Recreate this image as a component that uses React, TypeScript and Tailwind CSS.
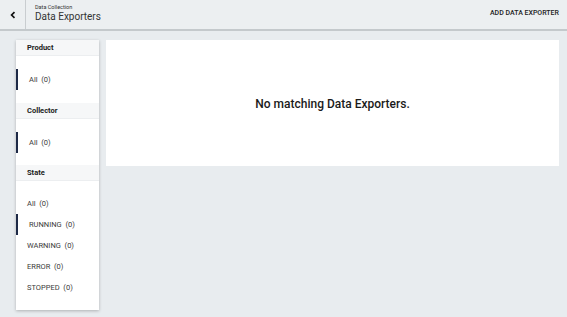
import React from "react";

const font = { fontFamily: "Roboto, 'Liberation Sans', sans-serif" };

function Item({ label, active }: { label: string; active?: boolean }) {
  return (
    <div
      className={`h-[21px] flex items-center text-[7.5px] text-[#3a3a3a] ${
        active ? "border-l-2 border-[#1e2a47] pl-[11px]" : "pl-[11px]"
      }`}
    >
      <span className="whitespace-pre">{label}</span>
    </div>
  );
}

function Section({
  title,
  items,
  body,
}: {
  title: string;
  items: { label: string; active?: boolean }[];
  body: string;
}) {
  return (
    <div>
      <div className="h-[16px] flex items-center pt-[1px] pl-[11px] bg-[#f6f7f8] border-b border-[#eceef0] text-[7.5px] font-bold text-[#222]">
        {title}
      </div>
      <div className={body}>
        {items.map((it) => (
          <Item key={it.label} label={it.label} active={it.active} />
        ))}
      </div>
    </div>
  );
}

export default function App() {
  return (
    <div className="w-[567px] h-[317px] flex flex-col overflow-hidden bg-[#e8ecef]" style={font}>
      <div className="h-[31px] flex bg-[#eceff1] border-b-2 border-[#c4c9cc] shrink-0">
        <div className="w-[26px] flex items-center justify-center border-r border-[#c9cdd0]">
          <svg width="8" height="8" viewBox="0 0 8 8">
            <path d="M5.5 1.2 L2.6 4 L5.5 6.8" stroke="#111" strokeWidth="1.7" fill="none" />
          </svg>
        </div>
        <div className="flex flex-col justify-center pl-[9px] pb-[2px]">
          <div className="text-[5.5px] leading-[7px] text-[#333]">Data Collection</div>
          <div className="text-[10px] leading-[12px] text-[#333]">Data Exporters</div>
        </div>
        <div className="flex-1" />
        <div className="flex items-center pr-[8px] pb-[2px] text-[7px] font-medium text-[#222]">
          ADD DATA EXPORTER
        </div>
      </div>
      <div className="flex-1 flex gap-[7px] pl-[16px] pr-[8px] pt-[9px]">
        <div className="w-[83px] self-start bg-white shadow-[0_1px_3px_rgba(0,0,0,0.25)]">
          <Section title="Product" body="pt-[13px] pb-[13px]" items={[{ label: "All  (0)", active: true }]} />
          <Section title="Collector" body="pt-[13px] pb-[12px]" items={[{ label: "All  (0)", active: true }]} />
          <Section
            title="State"
            body="pt-[12px] pb-[12px]"
            items={[
              { label: "All  (0)" },
              { label: "RUNNING  (0)", active: true },
              { label: "WARNING  (0)" },
              { label: "ERROR  (0)" },
              { label: "STOPPED  (0)" },
            ]}
          />
        </div>
        <div className="flex-1 h-[126px] bg-white flex items-center justify-center">
          <span className="text-[12px] font-medium text-[#1a1a1a] pt-[1px]">No matching Data Exporters.</span>
        </div>
      </div>
    </div>
  );
}
